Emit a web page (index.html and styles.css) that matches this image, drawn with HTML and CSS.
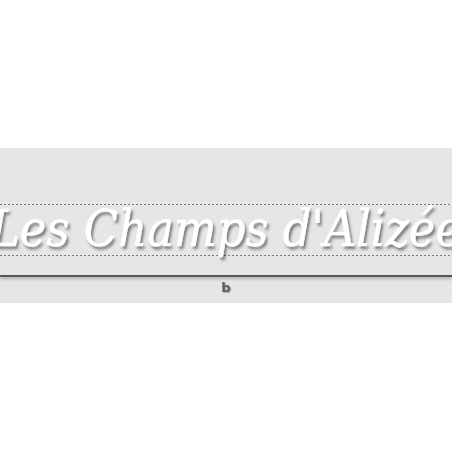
FILE: index.html
```html
<!DOCTYPE html>
<html>
<head>
<meta charset="utf-8">
<link rel="stylesheet" href="styles.css">
</head>
<body>
<div class="band">
  <div class="title-box">
    <h1 class="title">Les Champs d'Alizée</h1>
  </div>
  <div class="rule"></div>
  <div class="mark">b</div>
</div>
</body>
</html>
```
FILE: styles.css
```css
html, body {
  margin: 0;
  padding: 0;
  background: #ffffff;
  overflow: hidden;
}
body {
  width: 452px;
  height: 452px;
  padding-top: 148px;
  box-sizing: border-box;
}
.band {
  background: #e6e6e6;
  height: 155px;
  padding-top: 56px;
  box-sizing: border-box;
  overflow: hidden;
}
.title-box {
  height: 52px;
  display: flex;
  justify-content: center;
  align-items: flex-start;
  background-image:
    repeating-linear-gradient(to right, #7a7a7a 0 2px, transparent 2px 4px),
    repeating-linear-gradient(to right, #7a7a7a 0 2px, transparent 2px 4px);
  background-size: 100% 1px, 100% 1px;
  background-position: 0 0, 0 100%;
  background-repeat: no-repeat;
}
.title {
  margin: 0;
  font-family: "DejaVu Serif Condensed", "DejaVu Serif", serif;
  font-stretch: condensed;
  font-style: italic;
  font-weight: normal;
  font-size: 50px;
  line-height: 51px;
  color: #ffffff;
  white-space: nowrap;
  text-shadow: 2px 3px 3px rgba(0, 0, 0, 0.5);
  flex-shrink: 0;
  -webkit-text-stroke: 0.6px #ffffff;
}
.rule {
  margin-top: 19px;
  height: 2px;
  background: #555555;
  box-shadow: 0 2px 3px rgba(0, 0, 0, 0.3);
}
.mark {
  text-align: center;
  font-family: "DejaVu Sans", sans-serif;
  font-weight: bold;
  font-size: 13px;
  line-height: 16px;
  margin-top: 3px;
  color: #5e5e5e;
  text-shadow: 1px 1px 1px rgba(0, 0, 0, 0.3);
}
```
